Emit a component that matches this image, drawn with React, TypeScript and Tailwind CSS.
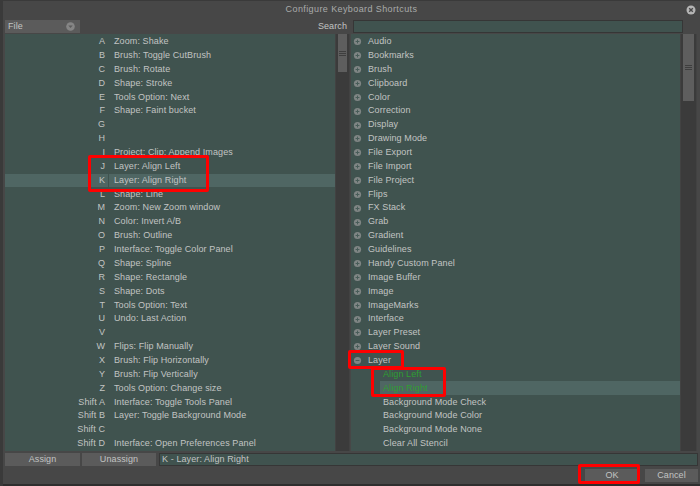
import React from 'react'

const keys: [string, string][] = [
  ['A', 'Zoom: Shake'],
  ['B', 'Brush: Toggle CutBrush'],
  ['C', 'Brush: Rotate'],
  ['D', 'Shape: Stroke'],
  ['E', 'Tools Option: Next'],
  ['F', 'Shape: Faint bucket'],
  ['G', ''],
  ['H', ''],
  ['I', 'Project: Clip: Append Images'],
  ['J', 'Layer: Align Left'],
  ['K', 'Layer: Align Right'],
  ['L', 'Shape: Line'],
  ['M', 'Zoom: New Zoom window'],
  ['N', 'Color: Invert A/B'],
  ['O', 'Brush: Outline'],
  ['P', 'Interface: Toggle Color Panel'],
  ['Q', 'Shape: Spline'],
  ['R', 'Shape: Rectangle'],
  ['S', 'Shape: Dots'],
  ['T', 'Tools Option: Text'],
  ['U', 'Undo: Last Action'],
  ['V', ''],
  ['W', 'Flips: Flip Manually'],
  ['X', 'Brush: Flip Horizontally'],
  ['Y', 'Brush: Flip Vertically'],
  ['Z', 'Tools Option: Change size'],
  ['Shift A', 'Interface: Toggle Tools Panel'],
  ['Shift B', 'Layer: Toggle Background Mode'],
  ['Shift C', ''],
  ['Shift D', 'Interface: Open Preferences Panel'],
]

const groups = [
  'Audio', 'Bookmarks', 'Brush', 'Clipboard', 'Color', 'Correction', 'Display',
  'Drawing Mode', 'File Export', 'File Import', 'File Project', 'Flips', 'FX Stack',
  'Grab', 'Gradient', 'Guidelines', 'Handy Custom Panel', 'Image Buffer', 'Image',
  'ImageMarks', 'Interface', 'Layer Preset', 'Layer Sound',
]

const layerItems: { label: string; green?: boolean; selected?: boolean }[] = [
  { label: 'Align Left', green: true },
  { label: 'Align Right', green: true, selected: true },
  { label: 'Background Mode Check' },
  { label: 'Background Mode Color' },
  { label: 'Background Mode None' },
  { label: 'Clear All Stencil' },
]

function CircleIcon({ open }: { open?: boolean }) {
  return (
    <svg width="9" height="9" viewBox="0 0 9 9" className="shrink-0">
      <circle cx="4.5" cy="4.5" r="3.6" fill="#7f8584" />
      <rect x="2.6" y="4" width="3.8" height="1" fill="#485c58" />
      {!open && <rect x="4" y="2.6" width="1" height="3.8" fill="#485c58" />}
    </svg>
  )
}

function Scrollbar({ thumb, width }: { thumb: number; width: string }) {
  return (
    <div className={`${width} h-full bg-[#3b3b3b] border-x border-[#424242] flex flex-col px-[2px]`}>
      <div className="bg-[#5e5e5e] flex items-center justify-center" style={{ height: thumb }}>
        <div className="flex flex-col gap-[1px] w-[7px]">
          <div className="h-[1px] bg-[#3e3e3e]" />
          <div className="h-[1px] bg-[#3e3e3e]" />
          <div className="h-[1px] bg-[#3e3e3e]" />
        </div>
      </div>
    </div>
  )
}

export default function App() {
  return (
    <div
      className="relative w-[700px] h-[486px] bg-[#474747] text-[#c2c4c3] text-[9px] tracking-[0.1px] flex flex-col border-t border-l-[3px] border-[#3a3a3a] overflow-hidden"
      style={{ fontFamily: '"Liberation Sans", Arial, sans-serif' }}
    >
      {/* Title */}
      <div className="h-[18px] flex items-center justify-center relative text-[#a9abaa] tracking-[0.4px]">
        Configure Keyboard Shortcuts
        <svg width="10" height="10" viewBox="0 0 10 10" className="absolute right-[4px] top-[4px]">
          <circle cx="5" cy="5" r="4.5" fill="#b5b5b5" />
          <path d="M3.2 3.2 L6.8 6.8 M6.8 3.2 L3.2 6.8" stroke="#474747" strokeWidth="1.4" />
        </svg>
      </div>

      {/* Toolbar */}
      <div className="h-[15px] flex items-center pl-[2px] pr-[17px]">
        <div className="w-[75px] h-[13px] bg-[#5b5b5b] flex items-center justify-between pl-[3px] pr-[5px]">
          <span>File</span>
          <svg width="9" height="9" viewBox="0 0 9 9">
            <circle cx="4.5" cy="4.5" r="4.3" fill="#858585" />
            <path d="M2.3 3.4 L6.7 3.4 L4.5 6 Z" fill="#5b5b5b" />
          </svg>
        </div>
        <div className="flex-1 text-right pr-[6px]">Search</div>
        <div className="w-[330px] h-[13px] bg-[#40534f] border border-[#363636]" />
      </div>

      {/* Lists */}
      <div className="h-[417px] flex pl-[2px] pr-[3px]">
        <div className="w-[330px] h-full bg-[#40534f] flex flex-col pt-[1px]">
          {keys.map(([k, d]) => {
            const sel = k === 'K'
            return (
              <div key={k} className={`h-[13.86px] shrink-0 flex items-center ${sel ? 'bg-[#4f6663]' : ''}`}>
                <div className="w-[101px] text-right pr-[1px]">{k}</div>
                {sel && <div className="w-[1px] h-full bg-[#40534f] ml-[2px]" />}
                <div className={sel ? 'pl-[5px]' : 'pl-[8px]'}>{d}</div>
              </div>
            )
          })}
        </div>
        <Scrollbar thumb={38} width="w-[15px]" />
        <div className="w-[1px]" />
        <div className="w-[329px] h-full bg-[#40534f] flex flex-col pt-[1px]">
          {groups.map((g) => (
            <div key={g} className="h-[13.86px] shrink-0 flex items-center pl-[2px] gap-[6px]">
              <CircleIcon />
              <span>{g}</span>
            </div>
          ))}
          <div className="h-[13.86px] shrink-0 flex items-center pl-[2px] gap-[6px]">
            <CircleIcon open />
            <span>Layer</span>
          </div>
          {layerItems.map((it) => (
            <div
              key={it.label}
              className={`h-[13.86px] shrink-0 flex items-center pl-[3px] ml-[29px] ${it.selected ? 'bg-[#4f6663]' : ''} ${it.green ? 'text-[#2f9e32]' : ''}`}
            >
              {it.label}
            </div>
          ))}
        </div>
        <Scrollbar thumb={67} width="w-[17px]" />
      </div>

      {/* Assign row */}
      <div className="h-[15px] flex items-center gap-[2px] pl-[2px] pr-[2px] mt-[1px]">
        <div className="w-[75px] h-[13px] bg-[#5b5b5b] flex items-center justify-center">Assign</div>
        <div className="w-[74px] h-[13px] bg-[#5b5b5b] flex items-center justify-center">Unassign</div>
        <div className="flex-1 h-[13px] bg-[#40534f] border border-[#363636] flex items-center pl-[2px] ml-[1px]">
          K - Layer: Align Right
        </div>
      </div>

      {/* Bottom buttons */}
      <div className="flex-1 flex items-center justify-end gap-[6px] pr-[2px] border-b-[2px] border-[#2e2e2e]">
        <div className="w-[54px] h-[13px] bg-[#5b5b5b] flex items-center justify-center">OK</div>
        <div className="w-[53px] h-[13px] bg-[#5b5b5b] flex items-center justify-center">Cancel</div>
      </div>

      {/* Red annotation boxes */}
      <div className="absolute left-[85px] top-[154px] w-[121px] h-[37px] border-[3px] border-[#ff0000] rounded-[2px]" />
      <div className="absolute left-[345px] top-[349px] w-[56px] h-[19px] border-[3px] border-[#ff0000] rounded-[2px]" />
      <div className="absolute left-[368px] top-[366px] w-[75px] h-[30px] border-[3px] border-[#ff0000] rounded-[2px]" />
      <div className="absolute left-[575px] top-[463px] w-[62px] h-[20px] border-[3px] border-[#ff0000] rounded-[2px]" />
    </div>
  )
}
